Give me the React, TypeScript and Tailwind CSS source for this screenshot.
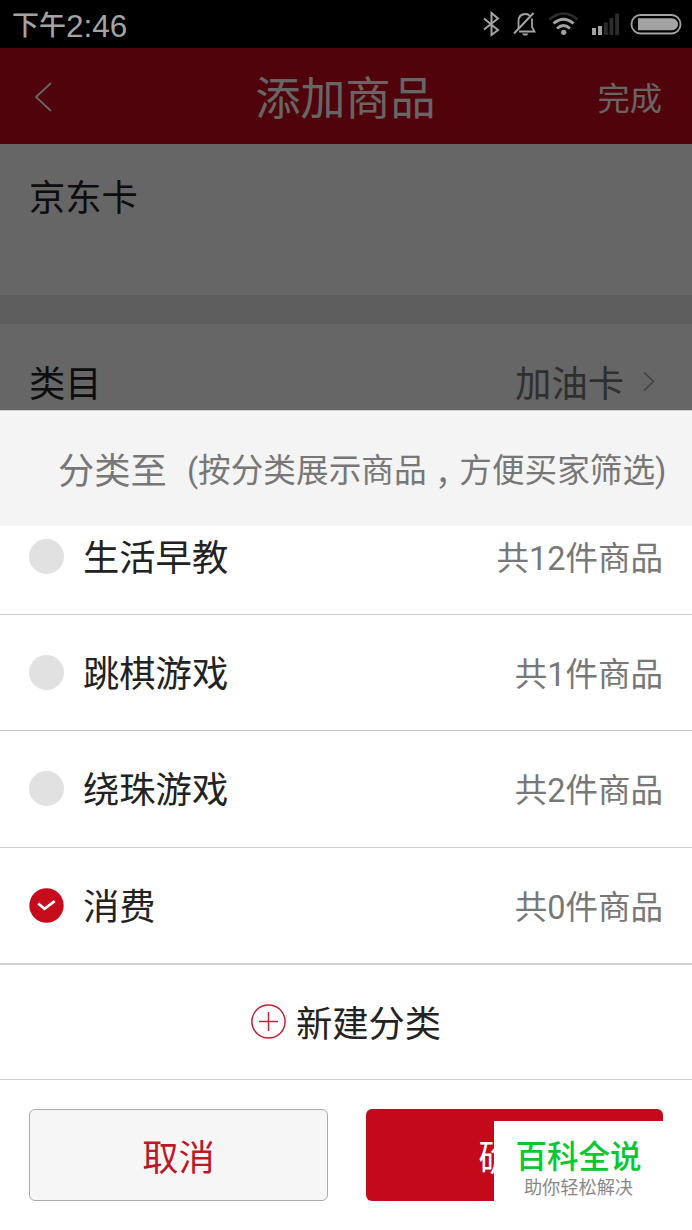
import clsx from 'clsx';

interface Category {
  id: string;
  name: string;
  count: number;
  selected?: boolean;
}

const categories: Category[] = [
  { id: 'early-edu', name: '生活早教', count: 12 },
  { id: 'checkers', name: '跳棋游戏', count: 1 },
  { id: 'beads', name: '绕珠游戏', count: 2 },
  { id: 'spending', name: '消费', count: 0, selected: true },
];

const StatusBar = () => (
  <div className="flex h-12 items-center justify-between bg-black pl-3 pr-2.5 text-[#a3a3a3]">
    <div className="flex items-center whitespace-nowrap pt-1 leading-[32px]">
      <span className="text-[27px] font-medium">下午</span>
      <span className="font-['Liberation_Sans'] text-[31.5px]">2:46</span>
    </div>
    <svg className="h-12 w-[202px] shrink-0" viewBox="480 0 202 48" fill="none" stroke="#a3a3a3">
      <path d="M484 18.5L498 30L491.5 35V13L498 18.5L484 29.5" strokeWidth="2" />
      <path
        d="M518.5 29V21.5C518.5 17 521 14 525.5 14C527.5 14 529 14.7 530.2 16M532 18.5V27L534.5 31.5H519"
        strokeWidth="1.8"
      />
      <path d="M514 33.5L533.5 13" strokeWidth="2" />
      <path d="M522 33.5H528.5L527 35.5H523.5Z" fill="#a3a3a3" stroke="none" />
      <path d="M549.5 19.5Q563.5 7.5 577.5 19.5" stroke="#2d2d2d" strokeWidth="2.5" />
      <path d="M553.5 23.5Q563.5 15 573.5 23.5M557 28.5Q563.5 22.5 570 28.5" strokeWidth="2.7" />
      <circle cx="563.7" cy="32.3" r="2.6" fill="#a3a3a3" stroke="none" />
      <path d="M592 28H596V35H592ZM598 26H602V35H598Z" fill="#a3a3a3" stroke="none" />
      <path d="M604 22.5H607.7V35H604ZM609.5 18H613.2V35H609.5ZM615.2 13.5H619V35H615.2Z" fill="#2d2d2d" stroke="none" />
      <rect x="631.5" y="15" width="49" height="18.5" rx="9" strokeWidth="1.8" />
      <path d="M638 18.2H671.5C675 18.2 678 21 678 24.2C678 27.5 675 30.3 671.5 30.3H638Z" fill="#a3a3a3" stroke="none" />
    </svg>
  </div>
);

const ProductForm = () => (
  <div className="relative h-[362px] overflow-hidden bg-white">
    <header className="grid h-24 grid-cols-3 items-center bg-[#c8081c] pl-[33px] pr-[30px] text-white">
      <svg className="h-8 w-5" viewBox="0 0 20 32" fill="none" stroke="currentColor" strokeWidth="1.8">
        <path d="M18 3L3 17L18 31" />
      </svg>
      <h1 className="-ml-1 justify-self-center whitespace-nowrap pt-2 text-[45px] leading-[60px]">添加商品</h1>
      <span className="justify-self-end pt-1.5 text-[32.3px] leading-[44px]">完成</span>
    </header>
    <div className="h-[151px] px-[29px] pt-[30px] text-[36.3px] leading-[50px] text-[#222]">京东卡</div>
    <div className="h-[29px] bg-[#ececec]" />
    <div className="flex h-[116px] items-center justify-between pl-[29px] pr-[37px] text-[36.3px] leading-[50px] text-[#222]">
      <span className="pt-1.5">类目</span>
      <span className="flex items-center text-[#777]">
        <span className="pt-1.5">加油卡</span>
        <svg className="ml-[19px] h-5 w-3" viewBox="0 0 12 20" fill="none" stroke="#a5a5a5" strokeWidth="1.7">
          <path d="M1 0.5L10.5 9.5L1 18.5" />
        </svg>
      </span>
    </div>
    <div className="absolute inset-0 bg-black/60" />
  </div>
);

const CategoryRow = ({ category }: { category: Category }) => (
  <li
    className={clsx(
      'flex shrink-0 items-center border-[#cfcfcf] pl-[28.5px] pr-[29px]',
      category.selected ? 'h-[117.4px] border-b-2' : 'h-[116.3px] border-b'
    )}
  >
    {category.selected ? (
      <svg className="h-[35px] w-[35px]" viewBox="0 0 35 35" fill="none">
        <circle cx="17.5" cy="17.5" r="17.2" fill="#c50b1c" />
        <path d="M9.2 15.5L15.5 20.8L25.7 13.2" stroke="#fff" strokeWidth="2.7" />
      </svg>
    ) : (
      <span className="h-[35px] w-[35px] rounded-full bg-[#e1e1e1]" />
    )}
    <span className="ml-[19.5px] flex-1 pt-[5px] text-[36.3px] leading-[50px] text-[#222]">{category.name}</span>
    <span className="pt-[5px] text-[32.5px] leading-[46px] text-[#777]">
      共{category.count}件商品
    </span>
  </li>
);

const CategorySheet = () => (
  <section className="bg-white">
    <div className="flex h-[116px] items-center whitespace-nowrap border-t border-[#cfcfcf] bg-[#f4f4f4] pl-[58px] text-[#777]">
      <h2 className="pt-1.5 text-[36.3px] leading-[50px]">分类至</h2>
      <p className="ml-5 flex pt-[14px] text-[32.65px] leading-[46px]">
        <span>(</span>
        <span>按分类展示商品</span>
        <span className="pt-2.5 font-['Noto_Sans_CJK_TC']">，</span>
        <span>方便买家筛选</span>
        <span>)</span>
      </p>
    </div>
    <ul className="flex h-[439px] flex-col justify-end overflow-hidden">
      {categories.map((category) => (
        <CategoryRow key={category.id} category={category} />
      ))}
    </ul>
    <button className="flex h-[115px] w-full items-center justify-center border-b border-[#cfcfcf] text-[36.3px] leading-[50px] text-[#222]">
      <svg className="mb-0.5 mr-2.5 h-[35px] w-[35px]" viewBox="0 0 35 35" fill="none" stroke="#c22236" strokeWidth="1.5">
        <circle cx="17.5" cy="17.5" r="16.6" />
        <path d="M17.5 8V27M8 17.5H27" />
      </svg>
      <span className="pt-1.5">新建分类</span>
    </button>
    <div className="flex gap-[38px] px-[29px] pt-[29px] text-[36.3px] leading-[50px]">
      <button className="h-[92px] flex-1 rounded-md border border-[#aaadad] bg-[#f6f6f6] pt-2 text-[#bd172a]">取消</button>
      <button className="h-[92px] flex-1 rounded-md bg-[#c3091a] pt-2 text-white">确定</button>
    </div>
  </section>
);

const App = () => (
  <div className="relative h-[1230px] w-[692px] overflow-hidden bg-white font-[Roboto,'Noto_Sans_CJK_SC',sans-serif]">
    <StatusBar />
    <ProductForm />
    <CategorySheet />
    <div className="absolute bottom-[25px] right-6 flex h-[84px] w-[174px] flex-col items-center bg-white pr-[5px] pt-4">
      <span className="text-[31.5px] font-medium leading-[42px] text-[#08c832]">百科全说</span>
      <span className="text-[18.2px] leading-[17px] text-[#888]">助你轻松解决</span>
    </div>
  </div>
);

export default App;
